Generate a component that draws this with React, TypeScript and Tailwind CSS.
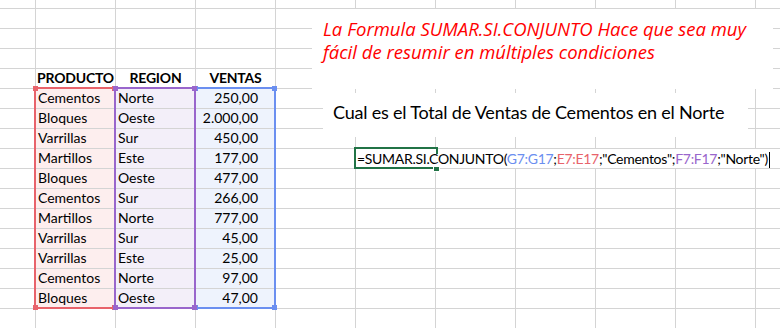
import React from "react";

const data: [string, string, string][] = [
  ["Cementos", "Norte", "250,00"],
  ["Bloques", "Oeste", "2.000,00"],
  ["Varrillas", "Sur", "450,00"],
  ["Martillos", "Este", "177,00"],
  ["Bloques", "Oeste", "477,00"],
  ["Cementos", "Sur", "266,00"],
  ["Martillos", "Norte", "777,00"],
  ["Varrillas", "Sur", "45,00"],
  ["Varrillas", "Este", "25,00"],
  ["Cementos", "Norte", "97,00"],
  ["Bloques", "Oeste", "47,00"],
];

const headers = ["PRODUCTO", "REGION", "VENTAS"];
const fills = ["bg-[#fdeeee]", "bg-[#f3eff9]", "bg-[#eef3fd]"];

function Cell({ r, c }: { r: number; c: number }) {
  const last = c === 10;
  let cls =
    "border-b border-[#d4d4d4] flex items-end overflow-visible whitespace-nowrap text-[14px] leading-[18px] pb-[1px] text-black " +
    (last ? "" : "border-r ");
  let content: React.ReactNode = null;
  if (r === 4 && c >= 1 && c <= 3) {
    cls += " justify-center font-bold tracking-[-0.2px]";
    content = headers[c - 1];
  } else if (r >= 5 && r <= 15 && c >= 1 && c <= 3) {
    const row = data[r - 5];
    cls += " " + fills[c - 1];
    if (c === 3) {
      cls += " justify-end pr-[17px]";
    } else {
      cls += " pl-[2px]";
    }
    content = row[c - 1];
  }
  return <div className={cls}>{content}</div>;
}

function Range({
  left,
  border,
  dot,
}: {
  left: string;
  border: string;
  dot: string;
}) {
  const d = "absolute w-[5px] h-[5px] " + dot;
  return (
    <div className={"absolute top-[87px] w-[82px] h-[222px] border-2 " + left + " " + border}>
      <div className={d + " -left-[3px] -top-[3px]"} />
      <div className={d + " -right-[3px] -top-[3px]"} />
      <div className={d + " -left-[3px] -bottom-[3px]"} />
      <div className={d + " -right-[3px] -bottom-[3px]"} />
    </div>
  );
}

export default function App() {
  const cells: React.ReactNode[] = [];
  for (let r = 0; r < 17; r++) {
    for (let c = 0; c < 11; c++) {
      cells.push(<Cell key={r + "-" + c} r={r} c={c} />);
    }
  }
  return (
    <div
      className="relative w-[780px] h-[328px] overflow-hidden bg-white"
      style={{ fontFamily: "Lato, 'Liberation Sans', sans-serif" }}
    >
      <div className="grid grid-cols-[36px_repeat(9,80px)_1fr] grid-rows-[9px_repeat(16,20px)] w-[780px]">
        {cells}
      </div>

      {/* range outlines: blue, red, purple (drawn in formula order) */}
      <Range left="left-[194px]" border="border-[#6b8ff0]" dot="bg-[#6b8ff0]" />
      <Range left="left-[34px]" border="border-[#e8636b]" dot="bg-[#e8636b]" />
      <Range left="left-[114px]" border="border-[#9966cc]" dot="bg-[#9966cc]" />

      {/* text box 1 */}
      <div className="absolute left-[312px] top-[9px] w-[461px] h-[80px] bg-white pl-[11px] pt-[8px]">
        <div
          className="text-[#ff0000] italic text-[18.5px] leading-[23px] whitespace-nowrap tracking-[0px] flex flex-col"
          style={{ fontFamily: "'Open Sans', 'Liberation Sans', sans-serif" }}
        >
          <span>La Formula SUMAR.SI.CONJUNTO Hace que sea muy</span>
          <span>fácil de resumir en múltiples condiciones</span>
        </div>
      </div>

      {/* text box 2 */}
      <div className="absolute left-[323px] top-[93px] w-[425px] h-[44px] bg-white pl-[10px] pb-[7px] flex items-center">
        <span className="text-[18px] leading-[24px] tracking-[-0.2px] text-black whitespace-nowrap">
          Cual es el Total de Ventas de Cementos en el Norte
        </span>
      </div>

      {/* editing cell with overflowing formula */}
      <div className="absolute left-[356px] top-[149px] right-0 h-[19px] bg-white flex items-end">
        <span className="text-[14px] leading-[18px] tracking-[-0.3px] pl-[1px] whitespace-nowrap text-black">
          =SUMAR.SI.CONJUNTO(
          <span className="text-[#6b8ff0]">G7:G17</span>;
          <span className="text-[#e8636b]">E7:E17</span>;"Cementos";
          <span className="text-[#9966cc]">F7:F17</span>;"Norte")
        </span>
        <span className="ml-[1px] w-px h-[16px] bg-black" />
      </div>
      <div className="absolute left-[354px] top-[147px] w-[83px] h-[22px] border-l-2 border-t-2 border-b-2 border-[#217346] pointer-events-none">
        <div className="absolute -right-[1px] -top-[2px] w-[2px] h-[7px] bg-[#217346]" />
        <div className="absolute -right-[2px] -bottom-[4px] w-[5px] h-[4px] bg-[#217346] outline outline-1 outline-white" />
      </div>
    </div>
  );
}
